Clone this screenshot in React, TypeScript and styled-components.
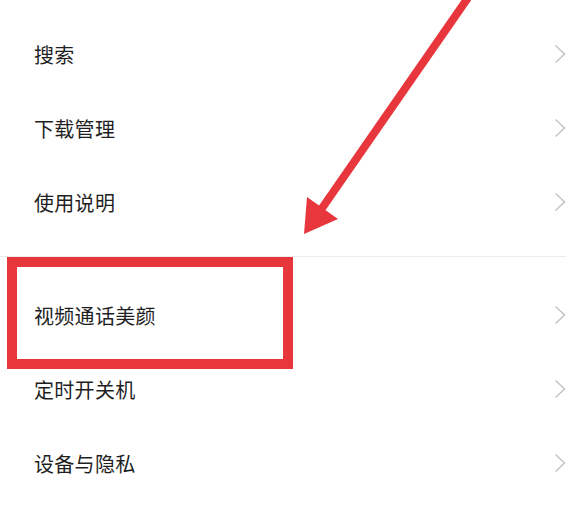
import React from 'react';
import styled, { createGlobalStyle } from 'styled-components';

const GlobalStyle = createGlobalStyle`
  html, body {
    margin: 0;
    padding: 0;
    background: #ffffff;
  }
`;

const Page = styled.div`
  position: relative;
  width: 587px;
  height: 518px;
  overflow: hidden;
  background: #ffffff;
  font-family: 'Noto Sans CJK SC', 'Noto Sans', sans-serif;
`;

const Group = styled.div<{ $top: number }>`
  display: flex;
  flex-direction: column;
  padding-top: ${p => p.$top}px;
`;

const Row = styled.div`
  display: flex;
  align-items: center;
  justify-content: space-between;
  height: 74px;
  padding: 0 21px 0 34px;
`;

const Label = styled.span`
  font-size: 20px;
  letter-spacing: 0.3px;
  color: #1f1f1f;
`;

const Divider = styled.div`
  height: 1px;
  margin: 17px 21px 0 0;
  background: #ececec;
`;

const Highlight = styled.div`
  position: absolute;
  left: 7px;
  top: 257px;
  width: 286px;
  height: 112px;
  box-sizing: border-box;
  border: 10px solid #e8373c;
`;

const Overlay = styled.svg`
  position: absolute;
  left: 0;
  top: 0;
  pointer-events: none;
`;

const Chevron = () => (
  <svg width="12" height="20" viewBox="0 0 12 20">
    <path d="M1.5 1.5 L10.5 10 L1.5 18.5" fill="none" stroke="#c4c4c4" strokeWidth="1.5" />
  </svg>
);

const top = ['搜索', '下载管理', '使用说明'];
const bottom = ['视频通话美颜', '定时开关机', '设备与隐私'];

const App: React.FC = () => (
  <Page>
    <GlobalStyle />
    <Group $top={17}>
      {top.map(t => (
        <Row key={t}>
          <Label>{t}</Label>
          <Chevron />
        </Row>
      ))}
    </Group>
    <Divider />
    <Group $top={21}>
      {bottom.map(t => (
        <Row key={t}>
          <Label>{t}</Label>
          <Chevron />
        </Row>
      ))}
    </Group>
    <Highlight />
    <Overlay width="587" height="518" viewBox="0 0 587 518">
      <line x1="472" y1="-8" x2="318" y2="214" stroke="#e8373c" strokeWidth="8" />
      <polygon points="304,234 307,197 338,219" fill="#e8373c" />
    </Overlay>
  </Page>
);

export default App;
